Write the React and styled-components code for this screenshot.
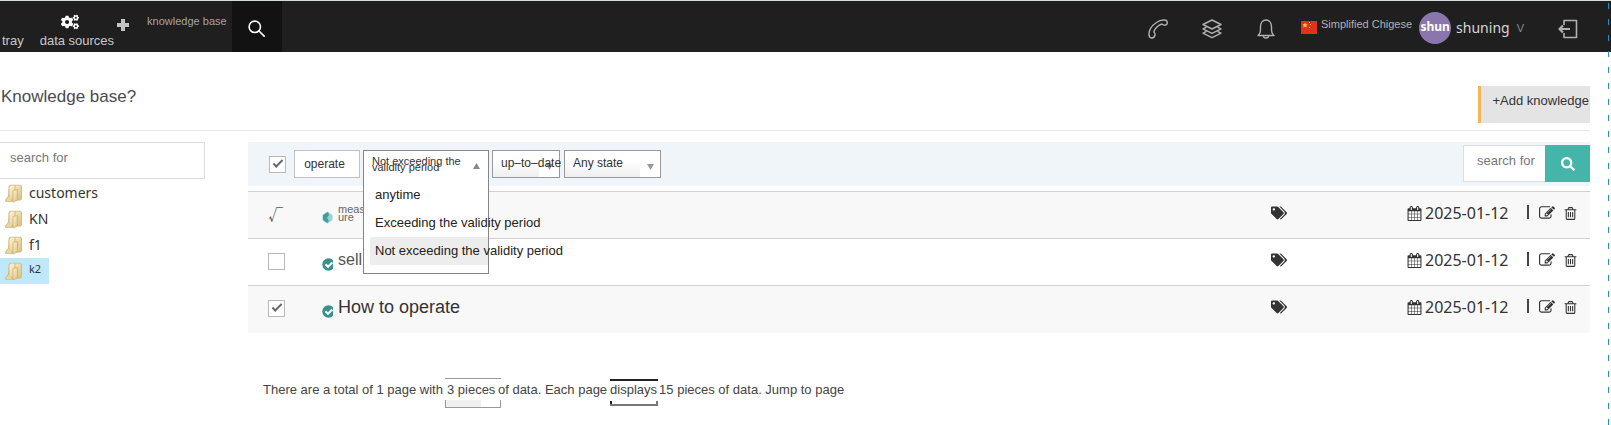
import React, { useState } from "react";
import styled, { createGlobalStyle, css } from "styled-components";
import { FaCogs, FaSearch, FaTags } from "react-icons/fa";

const sans = '"Liberation Sans", Arial, sans-serif';
const noto = '"Noto Sans", "Open Sans", sans-serif';

const GlobalStyle = createGlobalStyle`
  *, *::before, *::after { box-sizing: border-box; }
  body { margin: 0; background: #fff; color: #333; font: 13px/16px ${sans}; }
  button, input, select { font: inherit; color: inherit; margin: 0; }
  button { cursor: pointer; padding: 0; border: 0; background: none; }
  a { color: inherit; text-decoration: none; }
`;

const Page = styled.div`
  position: relative;
  min-height: 100vh;
`;

const GuideLine = styled.div`
  position: absolute;
  top: 0;
  bottom: 0;
  right: 2px;
  width: 1px;
  background: repeating-linear-gradient(#1b8fd2 0 6px, transparent 6px 16px) 0 3px;
`;

const Header = styled.header`
  display: flex;
  height: 52px;
  border-top: 1px solid #d3dcd8;
  background: #1f1f1f;
  color: #c9c9c9;
`;

const NavLink = styled.a`
  display: flex;
  flex-direction: column;
  align-items: center;
  justify-content: flex-end;
  gap: 2px;
  padding: 0 0 3px 2px;
  margin-right: 14px;
  svg { color: #fff; margin-right: 14px; }
`;

const NewLink = styled.a`
  display: flex;
  gap: 18px;
  padding-top: 12px;
  margin-left: -11px;
  font-size: 11px;
  color: #a4a4a4;
  svg { margin-top: 6px; color: #c4c4c4; }
`;

const HeaderSearch = styled.button`
  width: 50px;
  margin-left: 5px;
  padding-top: 3px;
  display: grid;
  place-items: center;
  background: #121212;
  color: #fff;
`;

const HeaderTools = styled.div`
  display: flex;
  align-items: center;
  margin-left: auto;
  padding: 2px 33px 0 0;
`;

const ToolButton = styled.button`
  display: grid;
  place-items: center;
  width: 54px;
  height: 32px;
  padding-top: 2px;
  color: #b0b0b0;
`;

const Language = styled.button`
  display: flex;
  align-items: center;
  gap: 4px;
  margin: 0 7px 0 8px;
  font-size: 11px;
  color: #b2b2b2;
  span { padding-bottom: 8px; }
`;

const Account = styled.button`
  display: flex;
  align-items: center;
  gap: 5px;
  font: 14px/20px ${noto};
  color: #d6d6d6;
`;

const Avatar = styled.span`
  width: 32px;
  height: 32px;
  border-radius: 50%;
  background: #8a76ad;
  color: #fff;
  font: bold 12px/30px ${noto};
  text-align: center;
`;

const Caret = styled.span`
  font: 11px/20px ${sans};
  color: #8c8c8c;
  margin-left: 2px;
`;

const Logout = styled(ToolButton)`
  width: 20px;
  margin-left: 34px;
`;

const Content = styled.main`
  padding-right: 21px;
`;

const TitleBar = styled.div`
  display: flex;
  justify-content: space-between;
  align-items: flex-start;
  height: 79px;
  padding-top: 34px;
  border-bottom: 1px solid #e8e8e8;
`;

const Title = styled.h1`
  margin: 0 0 0 1px;
  font: 17px/22px ${sans};
  color: #4b4b52;
`;

const AddButton = styled.button`
  height: 37px;
  padding: 0 1px 8px 12px;
  border-left: 3px solid #f3b651;
  background: #e4e4e4;
`;

const Columns = styled.div`
  display: flex;
  gap: 43px;
  padding-top: 11px;
`;

const Sidebar = styled.aside`
  flex: 0 0 205px;
`;

const SideSearch = styled.input`
  display: block;
  width: 100%;
  height: 37px;
  padding: 0 10px 6px;
  border: 1px solid #ddd;
  border-left: 0;
  outline: 0;
  &::placeholder { color: #777; }
`;

const Tree = styled.ul`
  list-style: none;
  margin: 0;
  padding: 1px 0 0;
`;

const TreeItem = styled.li`
  display: flex;
`;

const TreeLink = styled.a`
  display: flex;
  align-items: center;
  gap: 6px;
  height: 26px;
  padding: 0 8px 0 5px;
  font: 14px/20px ${noto};
  ${(p) => p.$active && css`
    background: #bfe8fb;
    font: 11px/16px ${noto};
    span { padding-bottom: 4px; }
  `}
`;

const Panel = styled.section`
  flex: 1;
  min-width: 0;
`;

const Toolbar = styled.form`
  display: flex;
  align-items: center;
  height: 44px;
  padding-left: 21px;
  margin-bottom: 5px;
  background: #eff5f9;
`;

const Checkbox = styled.input`
  appearance: none;
  display: grid;
  place-items: center;
  width: 17px;
  height: 17px;
  border: 1px solid #b9b9b9;
  background: #fff;
  &:checked::after {
    content: "";
    width: 10px;
    height: 5px;
    margin-top: -3px;
    border: solid #666;
    border-width: 0 0 2px 2px;
    transform: rotate(-45deg);
  }
`;

const OperateButton = styled.button`
  width: 66px;
  height: 28px;
  margin: 0 3px 0 8px;
  padding-right: 5px;
  border: 1px solid #c2c2c2;
  background: #fff;
  font-size: 12px;
`;

const Dropdown = styled.div`
  position: relative;
  width: 126px;
  margin-right: 3px;
`;

const DropdownTrigger = styled.button`
  display: flex;
  justify-content: space-between;
  align-items: center;
  width: 100%;
  height: 28px;
  padding: 0 8px 1px;
  border: solid #858585;
  border-width: 1px 1px 0;
  background: #fff;
  font-size: 11px;
  line-height: 6px;
  text-align: left;
  svg { margin-top: 4px; color: #888; }
`;

const Menu = styled.ul`
  position: absolute;
  z-index: 1;
  top: 100%;
  left: 0;
  right: 0;
  height: 96px;
  margin: 0;
  padding: 3px 0 0;
  list-style: none;
  border: solid #858585;
  border-width: 0 1px 1px;
  background: #fff;
`;

const MenuItem = styled.li`
  height: 28px;
  padding: 0 0 0 11px;
  line-height: 28px;
  white-space: nowrap;
  color: #222;
  background: ${(p) => (p.$selected ? "linear-gradient(#ededed, #ededed) 6px 0 no-repeat" : "none")};
`;

const SelectBox = styled.label`
  position: relative;
  display: flex;
  align-items: center;
  width: ${(p) => p.$width}px;
  height: 28px;
  margin-right: 4px;
  border: 1px solid #999;
  background: linear-gradient(90deg, transparent calc(100% - 20px), #fff 0), linear-gradient(#fff 40%, #eee);
  svg { position: absolute; right: 6px; top: 13px; color: #999; }
`;

const PlainSelect = styled.select`
  appearance: none;
  position: relative;
  z-index: 1;
  width: calc(100% + 2px);
  flex: none;
  padding: 0 0 3px 8px;
  border: 0;
  outline: 0;
  background: none;
  font-size: 12px;
`;

const SearchGroup = styled.div`
  display: flex;
  margin: -1px 0 0 auto;
`;

const SearchInput = styled.input`
  width: 82px;
  height: 37px;
  padding: 0 0 7px 13px;
  border: 1px solid #ddd;
  border-right: 0;
  outline: 0;
  background: #fff;
  &::placeholder { color: #777; }
`;

const SearchButton = styled.button`
  display: grid;
  place-items: center;
  width: 45px;
  height: 37px;
  background: #45b5aa;
  color: #fff;
`;

const Table = styled.table`
  width: 100%;
  table-layout: fixed;
  border-collapse: collapse;
`;

const Row = styled.tr`
  height: 47px;
  border-top: 1px solid #d2d2d2;
  &:nth-child(odd) { background: #f8f8f8; }
`;

const Cell = styled.td`
  width: ${(p) => (p.$width ? p.$width + "px" : "auto")};
  padding: 0 0 ${(p) => p.$lift || 0}px ${(p) => p.$indent || 0}px;
`;

const Name = styled.div`
  display: flex;
  align-items: center;
  gap: 5px;
  font-size: ${(p) => p.$size}px;
  line-height: ${(p) => (p.$size < 12 ? 8 : 20)}px;
  color: ${(p) => p.$color};
  span { padding-bottom: 4px; }
  svg { margin-top: 4px; }
`;

const RootMark = styled.span`
  display: block;
  font: 15px/20px "Noto Sans CJK SC", ${sans};
  color: #555;
`;

const Dated = styled.div`
  display: flex;
  align-items: center;
  padding-bottom: 4px;
  font: 16px/20px ${noto};
  white-space: nowrap;
  time { width: 102px; margin-left: 3px; }
  button { display: grid; margin-left: 8px; }
`;

const Divider = styled.span`
  width: 2px;
  height: 14px;
  margin: 0 2px 2px 0;
  background: #444;
`;

const Pager = styled.form`
  display: flex;
  align-items: center;
  margin-top: 45px;
  padding-left: 15px;
  height: 30px;
  color: #444;
`;

const PageSelect = styled.select`
  appearance: none;
  width: 56px;
  height: 30px;
  margin: 0 -3px 0 2px;
  padding: 0 0 6px 2px;
  border: solid #999;
  border-width: 1px 0;
  outline: 0;
  background:
    linear-gradient(#999, #999) 0 100% / 1px 7px no-repeat,
    linear-gradient(#999, #999) 100% 100% / 1px 7px no-repeat,
    linear-gradient(#f0f0f0, #f0f0f0) 0 100% / 36px 7px no-repeat;
`;

const PageInput = styled.input`
  width: 48px;
  height: 27px;
  margin: 0 1px 0 3px;
  padding: 0 0 6px;
  border: solid #222;
  border-width: 2px 0;
  border-bottom-color: #777;
  outline: 0;
  background:
    linear-gradient(#222, #222) 0 100% / 2px 3px no-repeat,
    linear-gradient(#777, #777) 100% 100% / 2px 3px no-repeat;
`;

const PagerText = styled.span`
  padding-bottom: 6px;
`;

const Line = ({ size = 20, width = 1.3, children, ...rest }) => (
  <svg width={size} height={size} viewBox="0 0 20 20" fill="none" stroke="currentColor"
    strokeWidth={width} strokeLinecap="round" strokeLinejoin="round" {...rest}>{children}</svg>
);

const PhoneIcon = () => (
  <Line width={1.4}>
    <path d="M8.500 3.500C11 1.600 14 .8 16.500 1c1.500.1 2.800 1.300 2.800 2.600 0 1.700-1 2.600-2.500 2.600-1.300 0-2-.4-3-1.200C10.500 6 6.800 9.500 5.800 13c1.200.8 1.500 1.700 1.200 3-.4 1.800-1.700 3-3.200 3-1.600 0-2.600-1.200-2.800-2.800C.6 11.500 4 6.500 8.500 3.500z" />
  </Line>
);

const LayersIcon = () => (
  <Line width={1.4}>
    <path d="M10 1 19 5.500 10 10 1 5.500z" />
    <path d="M4 8.300 1 9.800l9 4.500 9-4.500-3-1.500" />
    <path d="M4 12.600 1 14.100l9 4.500 9-4.500-3-1.500" />
  </Line>
);

const BellIcon = () => (
  <Line width={1.4}>
    <path d="M2 16.500c2.500-2 2.500-4 2.500-8.500C4.500 4 6.700 1 10 1s5.500 3 5.500 7c0 4.500 0 6.500 2.500 8.500z" />
    <path d="M7.300 16.700c.3 3 5.100 3 5.400 0" />
  </Line>
);

const LogoutIcon = () => (
  <Line width={1.6} strokeLinecap="butt">
    <path d="M6 6V1.500h12.500v17H6V14" />
    <path d="M1.500 10H12M5 6.500 1.500 10 5 13.500" strokeWidth="2.200" />
  </Line>
);

const ThinSearch = () => (
  <Line size={17} width={1.900}>
    <circle cx="8" cy="8" r="6.700" />
    <path d="m13 13 6 6" />
  </Line>
);

const PlusIcon = () => (
  <svg width="12" height="12" viewBox="0 0 12 12" fill="currentColor">
    <path d="M4 0h4v4h4v4H8v4H4V8H0V4h4z" />
  </svg>
);

const FlagIcon = () => (
  <svg width="16" height="13" viewBox="0 0 16 13">
    <path fill="#e0301e" d="M0 0h16v13H0z" />
    <path fill="#ffcf3f" d="m4 1.500.8 1.700 1.900.2-1.400 1.200.4 1.900L4 5.600l-1.700.9.4-1.900-1.400-1.200 1.900-.2z" />
    <path fill="#ffcf3f" d="M8 1h1v1H8zM9 3h1v1H9zM8 6h1v1H8z" />
  </svg>
);

const FolderIcon = () => (
  <svg width="18" height="19" viewBox="0 0 18 19">
    <defs>
      <linearGradient id="paper" x2="1" y2="1">
        <stop stopColor="#fdf5d8" /><stop offset="1" stopColor="#dcc07c" />
      </linearGradient>
    </defs>
    <path fill="#d3bd85" d="M3.500 2.500 5 .8h10.500l1.500 1.400V15l-1.500 1.500H9L7 18H.500L0 16l3-4z" />
    <path fill="url(#paper)" d="M4.500 3 6 1.500h3.500V14L6 15l-1.500-3zM10.500 1.500H15l1 1V14.500l-1 1h-4.500z" />
    <path fill="#e8d5a0" d="M1.500 15 4 12.500 6.500 15v2.500h-5z" />
    <path fill="url(#paper)" stroke="#c9ab68" strokeWidth=".7" d="M8 6.500 12.500 5.500V16L8 18z" />
  </svg>
);

const StatusIcon = ({ pending }) => (
  <svg width="11" height="13" viewBox="0 0 11 13">
    {pending ? (
      <>
        <path fill="#9dd2d1" d="M5.500.500 10.500 4v5l-5 3.500L.500 9V4z" />
        <path fill="#3f9fa0" d="M1 4 6 1l1 3-2 3 2 3-2 2-4-3z" />
      </>
    ) : (
      <>
        <circle cx="6.500" cy="6.500" r="6.200" fill="#3a918b" />
        <path d="m3.500 6.300 2.500 2.500 4.300-4.300" fill="none" stroke="#fff" strokeWidth="2" />
      </>
    )}
  </svg>
);

const Triangle = ({ up }) => (
  <svg width="7" height="6" viewBox="0 0 7 6" fill="currentColor">
    <path d={up ? "M3.500 0 7 6H0z" : "M0 0h7L3.500 6z"} />
  </svg>
);

const Glyph = ({ size, d }) => (
  <svg width={size} height={size} viewBox="0 0 1792 1792" fill="currentColor"><path d={d} /></svg>
);

const calendarPath =
  "M192 1664h288v-288h-288v288zm352 0h320v-288h-320v288zm-352-352h288v-320h-288v320zm352 0h320v-320h-320v320zm-352-384h288v-288h-288v288zm736 736h320v-288h-320v288zm-384-736h320v-288h-320v288zm768 736h288v-288h-288v288zm-384-352h320v-320h-320v320zm-352-864v-288q0-13-9.500-22.500t-22.500-9.500h-64q-13 0-22.500 9.500t-9.500 22.500v288q0 13 9.500 22.500t22.500 9.500h64q13 0 22.500-9.500t9.500-22.500zm736 864h288v-320h-288v320zm-384-384h320v-288h-320v288zm384 0h288v-288h-288v288zm32-480v-288q0-13-9.500-22.500t-22.500-9.500h-64q-13 0-22.500 9.500t-9.500 22.500v288q0 13 9.500 22.500t22.500 9.500h64q13 0 22.500-9.500t9.500-22.500zm384-64v1280q0 52-38 90t-90 38h-1408q-52 0-90-38t-38-90v-1280q0-52 38-90t90-38h128v-96q0-66 47-113t113-47h64q66 0 113 47t47 113v96h384v-96q0-66 47-113t113-47h64q66 0 113 47t47 113v96h128q52 0 90 38t38 90z";
const editPath =
  "M888 1184l116-116-152-152-116 116v56h96v96h56zm440-720q-16-16-33 1l-350 350q-17 17-1 33t33-1l350-350q17-17 1-33zm80 594v190q0 119-84.500 203.500t-203.500 84.500h-832q-119 0-203.500-84.500t-84.500-203.500v-832q0-119 84.500-203.500t203.500-84.500h832q63 0 117 25 15 7 18 23 3 17-9 29l-49 49q-14 14-32 8-23-6-45-6h-832q-66 0-113 47t-47 113v832q0 66 47 113t113 47h832q66 0 113-47t47-113v-126q0-13 9-22l64-64q15-15 35-7t20 29zm-96-738l288 288-672 672h-288v-288zm444 132l-92 92-288-288 92-92q28-28 68-28t68 28l152 152q28 28 28 68t-28 68z";
const trashPath =
  "M704 736v576q0 14-9 23t-23 9h-64q-14 0-23-9t-9-23v-576q0-14 9-23t23-9h64q14 0 23 9t9 23zm256 0v576q0 14-9 23t-23 9h-64q-14 0-23-9t-9-23v-576q0-14 9-23t23-9h64q14 0 23 9t9 23zm256 0v576q0 14-9 23t-23 9h-64q-14 0-23-9t-9-23v-576q0-14 9-23t23-9h64q14 0 23 9t9 23zm128 724v-948h-896v948q0 22 7 40.500t14.500 27 10.500 8.500h832q3 0 10.500-8.500t14.500-27 7-40.500zm-672-1076h448l-48-117q-7-9-17-11h-317q-10 2-17 11zm928 32v64q0 14-9 23t-23 9h-96v948q0 83-47 143.500t-113 60.500h-832q-66 0-113-58.500t-47-141.500v-952h-96q-14 0-23-9t-9-23v-64q0-14 9-23t23-9h309l70-167q15-37 54-63t79-26h320q40 0 79 26t54 63l70 167h309q14 0 23 9t9 23z";

const folders = ["customers", "KN", "f1", "k2"];
const periods = ["anytime", "Exceeding the validity period", "Not exceeding the validity period"];
const articles = [
  { name: <>meas<br />ure</>, label: "measure", size: 11, color: "#666", pending: true, mark: true },
  { name: "sell", label: "sell", size: 16, color: "#555", checked: false },
  { name: "How to operate", label: "How to operate", size: 18, color: "#333", checked: true },
];

export default function App() {
  const [period, setPeriod] = useState(2);
  return (
    <Page>
      <GlobalStyle />
      <Header>
        <NavLink href="#tray">tray</NavLink>
        <NavLink href="#sources"><FaCogs size={18} />data sources</NavLink>
        <NewLink href="#new"><PlusIcon />knowledge base</NewLink>
        <HeaderSearch aria-label="Search"><ThinSearch /></HeaderSearch>
        <HeaderTools>
          <ToolButton aria-label="Calls"><PhoneIcon /></ToolButton>
          <ToolButton aria-label="Layers"><LayersIcon /></ToolButton>
          <ToolButton aria-label="Notifications"><BellIcon /></ToolButton>
          <Language><FlagIcon /><span>Simplified Chigese</span></Language>
          <Account><Avatar>shun</Avatar>shuning<Caret>V</Caret></Account>
          <Logout aria-label="Log out"><LogoutIcon /></Logout>
        </HeaderTools>
      </Header>
      <Content>
        <TitleBar>
          <Title>Knowledge base?</Title>
          <AddButton>+Add knowledge</AddButton>
        </TitleBar>
        <Columns>
          <Sidebar>
            <SideSearch placeholder="search for" aria-label="Search folders" />
            <Tree>
              {folders.map((f) => (
                <TreeItem key={f}>
                  <TreeLink href={"#" + f} $active={f === "k2"}><FolderIcon /><span>{f}</span></TreeLink>
                </TreeItem>
              ))}
            </Tree>
          </Sidebar>
          <Panel>
            <Toolbar onSubmit={(e) => e.preventDefault()}>
              <Checkbox type="checkbox" defaultChecked aria-label="Select all" />
              <OperateButton type="button">operate</OperateButton>
              <Dropdown>
                <DropdownTrigger type="button" aria-haspopup="listbox" aria-expanded="true">
                  <span>Not exceeding the<br />validity period</span><Triangle up />
                </DropdownTrigger>
                <Menu role="listbox">
                  {periods.map((p, i) => (
                    <MenuItem key={p} role="option" aria-selected={i === period}
                      $selected={i === period} onClick={() => setPeriod(i)}>{p}</MenuItem>
                  ))}
                </Menu>
              </Dropdown>
              <SelectBox $width={68}>
                <PlainSelect aria-label="Version"><option>up–to–date</option></PlainSelect><Triangle />
              </SelectBox>
              <SelectBox $width={97}>
                <PlainSelect aria-label="State"><option>Any state</option></PlainSelect><Triangle />
              </SelectBox>
              <SearchGroup>
                <SearchInput placeholder="search for" aria-label="Search articles" />
                <SearchButton aria-label="Search"><FaSearch size={14} /></SearchButton>
              </SearchGroup>
            </Toolbar>
            <Table>
              <tbody>
                {articles.map((a) => (
                  <Row key={a.label}>
                    <Cell $width={74} $indent={20} $lift={2}>
                      {a.mark ? <RootMark>√</RootMark>
                        : <Checkbox type="checkbox" defaultChecked={a.checked} aria-label={a.label} />}
                    </Cell>
                    <Cell>
                      <Name $size={a.size} $color={a.color}><StatusIcon pending={a.pending} /><span>{a.name}</span></Name>
                    </Cell>
                    <Cell $width={136}><Dated><FaTags size={16} /></Dated></Cell>
                    <Cell $width={183}>
                      <Dated>
                        <Glyph size={15} d={calendarPath} /><time dateTime="2025-01-12">2025-01-12</time>
                        <Divider />
                        <button aria-label="Edit"><Glyph size={16} d={editPath} /></button>
                        <button aria-label="Delete"><Glyph size={15} d={trashPath} /></button>
                      </Dated>
                    </Cell>
                  </Row>
                ))}
              </tbody>
            </Table>
            <Pager onSubmit={(e) => e.preventDefault()}>
              <PagerText>There are a total of 1 page with</PagerText>
              <PageSelect aria-label="Items"><option>3 pieces</option></PageSelect>
              <PagerText>of data. Each page</PagerText>
              <PageInput defaultValue="displays" aria-label="Items per page" />
              <PagerText>15 pieces of data. Jump to page</PagerText>
            </Pager>
          </Panel>
        </Columns>
      </Content>
      <GuideLine />
    </Page>
  );
}
